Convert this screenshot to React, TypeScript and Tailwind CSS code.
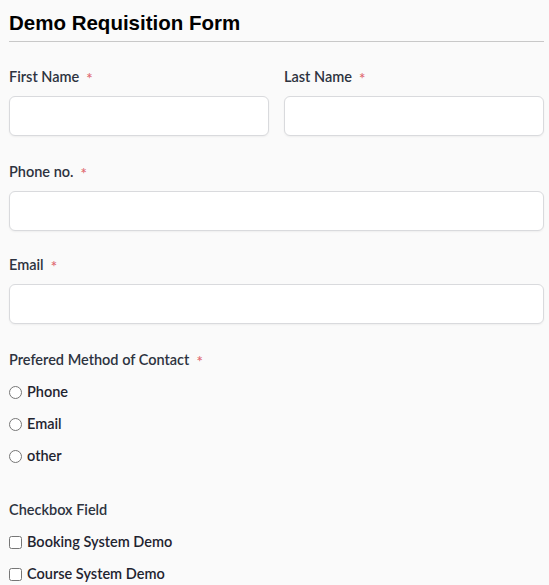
import React from 'react';

const Label = ({ text, required }: { text: string; required?: boolean }) => (
  <div className="h-5 flex items-center text-[14.5px] font-semibold text-[#2d3340]">
    {text}
    {required && <span className="ml-[7px] mt-[2px] text-[#e06a72] text-[15px]">*</span>}
  </div>
);

const Input = () => (
  <input
    type="text"
    className="mt-[9px] w-full h-10 bg-white border border-[#d9dadd] rounded-md shadow-[0_1px_2px_rgba(0,0,0,0.05)] outline-none px-3"
  />
);

const App: React.FC = () => {
  return (
    <div
      className="min-h-screen bg-[#fafafa] pl-[9px] pr-[5px] pt-[11px]"
      style={{ fontFamily: 'Lato, "Noto Sans", sans-serif' }}
    >
      {/* Header */}
      <h1
        className="text-[20.5px] font-bold text-black leading-[24px] pb-[6px] border-b border-[#c8c8c8]"
        style={{ fontFamily: '"Liberation Sans", Arial, sans-serif' }}
      >
        Demo Requisition Form
      </h1>

      <form className="pt-[25px]">
        <div className="grid grid-cols-2 gap-[15px] mb-[26px]">
          <div>
            <Label text="First Name" required />
            <Input />
          </div>
          <div>
            <Label text="Last Name" required />
            <Input />
          </div>
        </div>

        <div className="mb-[24px]">
          <Label text="Phone no." required />
          <Input />
        </div>

        <div className="mb-[26px]">
          <Label text="Email" required />
          <Input />
        </div>

        <div>
          <Label text="Prefered Method of Contact" required />
          <div className="mt-[6px]">
            {['Phone', 'Email', 'other'].map((opt) => (
              <label key={opt} className="flex items-center h-8 text-[14.5px] font-semibold text-[#1f2430]">
                <input type="radio" name="contact" className="w-[13px] h-[13px] m-0 mr-[5px] accent-gray-600" />
                {opt}
              </label>
            ))}
          </div>
        </div>

        <div className="mt-[28px]">
          <Label text="Checkbox Field" />
          <div className="mt-[6px]">
            {['Booking System Demo', 'Course System Demo'].map((opt) => (
              <label key={opt} className="flex items-center h-8 text-[14.5px] font-semibold text-[#1f2430]">
                <input type="checkbox" className="w-[13px] h-[13px] m-0 mr-[5px] accent-gray-600" />
                {opt}
              </label>
            ))}
          </div>
        </div>
      </form>
    </div>
  );
};

export default App;
